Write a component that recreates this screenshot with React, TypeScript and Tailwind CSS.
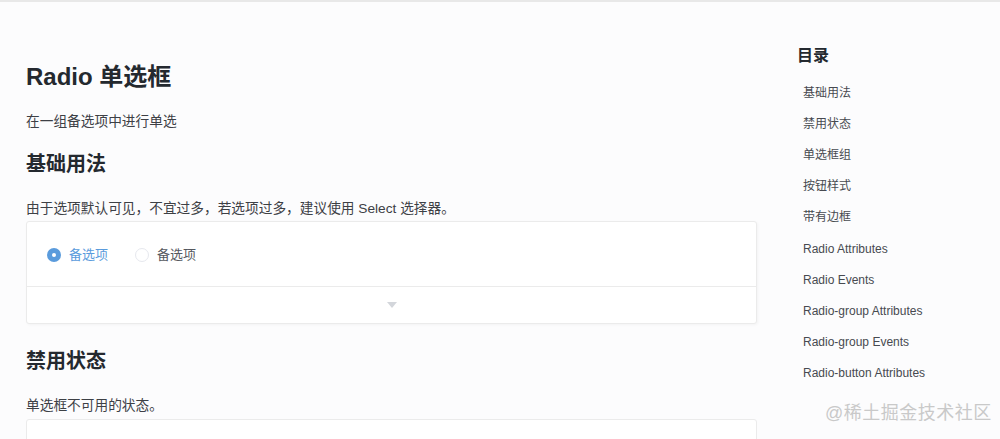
import React from "react";

const font = { fontFamily: '"Liberation Sans", "Noto Sans CJK SC", sans-serif' };

const toc = [
  "基础用法",
  "禁用状态",
  "单选框组",
  "按钮样式",
  "带有边框",
  "Radio Attributes",
  "Radio Events",
  "Radio-group Attributes",
  "Radio-group Events",
  "Radio-button Attributes",
];

export default function App() {
  return (
    <div
      className="relative w-[1000px] h-[439px] overflow-hidden bg-[#fcfcfd] border-t-2 border-[#e8e8e8]"
      style={font}
    >
      <div className="flex">
        <div className="w-[731px] ml-[26px] shrink-0">
          <h2 className="mt-[60px] text-[24px] leading-[30px] font-bold text-[#24292f]">Radio 单选框</h2>
          <p className="mt-[20px] text-[13.7px] leading-[20px] text-[#3d4045]">在一组备选项中进行单选</p>
          <h3 className="mt-[20px] text-[20px] leading-[24px] font-bold text-[#24292f]">基础用法</h3>
          <p className="mt-[23px] text-[13.7px] leading-[20px] text-[#3d4045]">
            由于选项默认可见，不宜过多，若选项过多，建议使用 Select 选择器。
          </p>
          <div className="mt-[2px] bg-white border border-[#ebebeb] rounded-[3px] shadow-[1px_1px_3px_rgba(0,0,0,0.04)]">
            <div className="h-[65px] pt-[2px] flex items-center px-[20px] border-b border-[#ebebeb]">
              <label className="flex items-center gap-[8px]">
                <span className="w-[14px] h-[14px] rounded-full bg-[#5a9bdc] flex items-center justify-center">
                  <span className="w-[4px] h-[4px] rounded-full bg-white" />
                </span>
                <span className="text-[13px] text-[#5a9bdc]">备选项</span>
              </label>
              <label className="flex items-center gap-[8px] ml-[27px]">
                <span className="w-[14px] h-[14px] rounded-full bg-white border border-[#e6e8ee]" />
                <span className="text-[13px] text-[#55585e]">备选项</span>
              </label>
            </div>
            <div className="h-[36px] flex items-center justify-center">
              <svg width="10" height="6" viewBox="0 0 10 6">
                <path d="M0 0 L10 0 L5 6 Z" fill="#d3d6db" />
              </svg>
            </div>
          </div>
          <h3 className="mt-[25px] text-[20px] leading-[24px] font-bold text-[#24292f]">禁用状态</h3>
          <p className="mt-[23px] text-[13.7px] leading-[20px] text-[#3d4045]">单选框不可用的状态。</p>
          <div className="mt-[3px] h-[60px] bg-white border border-[#ebebeb] rounded-[3px]" />
        </div>
        <div className="ml-[40px] w-[190px]">
          <div className="mt-[43px] text-[16px] leading-[22px] font-bold text-[#24292f]">目录</div>
          <ul className="mt-[10px] ml-[6px]">
            {toc.map((t) => (
              <li key={t} className="h-[31.2px] flex items-center text-[12px] text-[#474a50]">
                {t}
              </li>
            ))}
          </ul>
        </div>
      </div>
      <div className="absolute left-[825px] top-[400px] text-[18px] leading-[22px] text-[#c9c9c9] tracking-[0.5px]">
        @稀土掘金技术社区
      </div>
    </div>
  );
}
